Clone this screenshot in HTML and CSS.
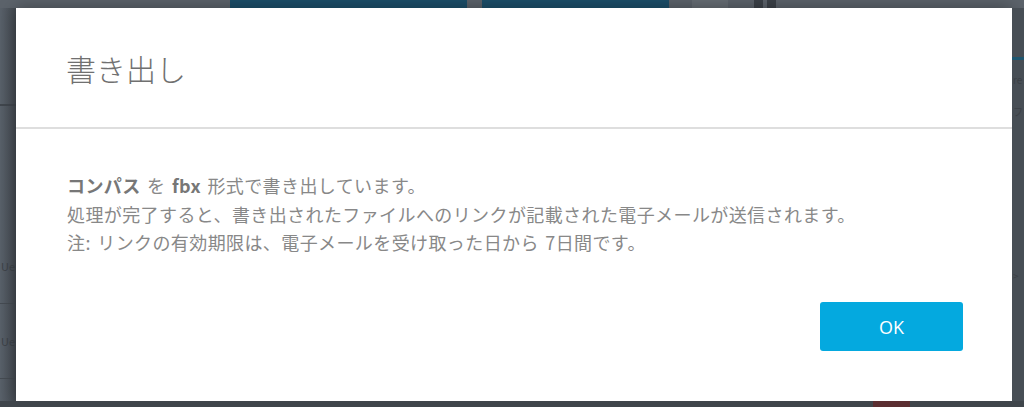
FILE: index.html
```html
<!DOCTYPE html>
<html lang="ja">
<head>
    <meta charset="UTF-8">
    <meta name="viewport" content="width=device-width, initial-scale=1.0">
    <title>書き出し</title>
    <link rel="stylesheet" href="styles.css">
</head>
<body>
    <div class="app">
        <div class="toolbar">
            <div class="tool-btn primary"></div>
            <div class="tool-btn primary narrow"></div>
            <div class="tool-btn ghost"></div>
            <div class="tool-square"></div>
            <div class="tool-square"></div>
        </div>

        <div class="side-left">
            <div class="side-row tall"></div>
            <div class="side-row">Ue</div>
            <div class="side-row">Ue</div>
        </div>

        <div class="modal">
            <div class="modal-header">
                <h1 class="modal-title">書き出し</h1>
            </div>
            <div class="modal-body">
                <p><strong>コンパス</strong> を <strong>fbx</strong> 形式で書き出しています。</p>
                <p>処理が完了すると、書き出されたファイルへのリンクが記載された電子メールが送信されます。</p>
                <p>注: リンクの有効期限は、電子メールを受け取った日から 7日間です。</p>
            </div>
            <div class="modal-footer">
                <button class="btn-ok">OK</button>
            </div>
        </div>

        <div class="side-right">
            <div class="accent-line"></div>
            <div class="side-text">re</div>
            <div class="side-text">フ</div>
            <div class="side-text low">&gt;</div>
        </div>

        <div class="bottom-strip">
            <div class="red-block"></div>
        </div>
    </div>
</body>
</html>
```

FILE: styles.css
```css
* {
    margin: 0;
    padding: 0;
    box-sizing: border-box;
}

body {
    width: 1024px;
    height: 407px;
    overflow: hidden;
    background: #50575f;
    font-family: "Noto Sans CJK JP", "Noto Sans", sans-serif;
}

.app {
    display: grid;
    grid-template-columns: 16px 996px 12px;
    grid-template-rows: 8px 393px 6px;
    height: 407px;
    background: linear-gradient(180deg, #5a6169 0%, #4d545b 60%, #41474e 100%);
}

/* dimmed page behind the dialog */
.toolbar {
    grid-column: 1 / 4;
    display: flex;
    align-items: stretch;
    padding-left: 230px;
    gap: 15px;
    background: #5c636b;
}

.tool-btn {
    width: 237px;
    background: #1c4f6a;
}

.tool-btn.narrow {
    width: 187px;
    margin-right: 8px;
}

.tool-btn.ghost {
    width: 36px;
    background: #666d74;
    margin-right: 11px;
}

.tool-square {
    width: 9px;
    background: #3b4148;
    margin-right: -11px;
}

.side-left {
    display: flex;
    flex-direction: column;
    overflow: hidden;
    background: linear-gradient(90deg, #59616a 0%, #444a51 100%);
}

.side-row {
    height: 75px;
    border-bottom: 1px solid #454b52;
    display: flex;
    align-items: center;
    padding-left: 1px;
    font-size: 11px;
    color: #3d4248;
    white-space: nowrap;
}

.side-row.tall {
    height: 98px;
    border-bottom: 2px solid #40464d;
    margin-bottom: 123px;
}

.side-right {
    display: flex;
    flex-direction: column;
    overflow: hidden;
    background: #474e55;
}

.accent-line {
    height: 3px;
    margin-top: 49px;
    background: #1d5670;
}

.side-text {
    margin-top: 8px;
    padding-left: 1px;
    font-size: 10px;
    line-height: 24px;
    color: #3b4045;
    white-space: nowrap;
}

.side-text.low {
    margin-top: 140px;
}

.bottom-strip {
    grid-column: 1 / 4;
    display: flex;
    padding-left: 873px;
    background: #3f454b;
}

.red-block {
    width: 37px;
    background: #5b2e31;
}

/* dialog */
.modal {
    background: #fff;
    display: flex;
    flex-direction: column;
    box-shadow: 0 0 16px rgba(0, 0, 0, 0.35);
}

.modal-header {
    height: 121px;
    display: flex;
    align-items: center;
    padding: 0 50px;
    border-bottom: 2px solid #dedede;
}

.modal-title {
    font-size: 30px;
    font-weight: 300;
    color: #707070;
    line-height: 1;
}

.modal-body {
    flex: 1;
    padding: 42px 51px 0;
    font-size: 18px;
    line-height: 28.5px;
    letter-spacing: 0.4px;
    word-spacing: 2px;
    color: #888;
    font-weight: 400;
}

.modal-body strong {
    font-weight: 700;
    color: #777;
}

.modal-footer {
    display: flex;
    justify-content: flex-end;
    padding: 0 49px 50px;
}

.btn-ok {
    width: 143px;
    height: 49px;
    border: none;
    border-radius: 3px;
    background: #04a9df;
    color: #fff;
    font-family: "Open Sans", "Noto Sans", sans-serif;
    font-size: 18px;
    cursor: pointer;
}
```
